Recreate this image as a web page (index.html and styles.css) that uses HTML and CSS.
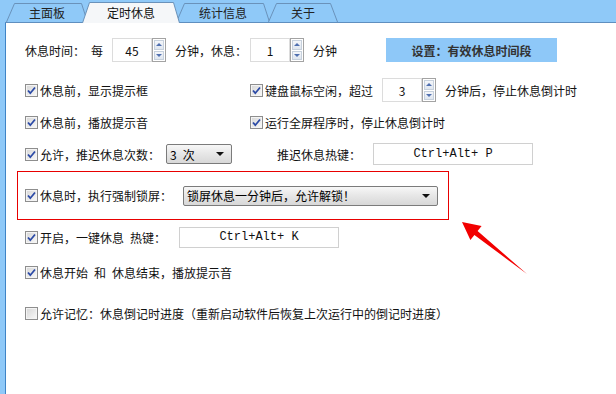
FILE: index.html
```html
<!DOCTYPE html>
<html lang="zh-CN">
<head>
    <meta charset="UTF-8">
    <title>定时休息</title>
    <link rel="stylesheet" href="styles.css">
</head>
<body>
    <div class="app">
        <div class="tabbar">
            <div class="tab tab-main">
                <svg width="82" height="19"><polygon points="0.5,19 8.5,0.5 75.5,0.5 81.5,19" fill="#8fc9f8"/><polyline points="0.5,19 8.5,0.5 75.5,0.5 81.5,19" fill="none" stroke="#6a92ba"/></svg>
                <span>主面板</span>
            </div>
            <div class="tab tab-timer active">
                <svg width="98" height="21"><polygon points="0.5,21 7.5,0.5 91.5,0.5 97.5,21" fill="#f5f7f9"/><polyline points="0.5,21 7.5,0.5 91.5,0.5 97.5,21" fill="none" stroke="#6a92ba"/></svg>
                <span>定时休息</span>
            </div>
            <div class="tab tab-stats">
                <svg width="94" height="19"><polygon points="0.5,19 8.5,0.5 87.5,0.5 93.5,19" fill="#8fc9f8"/><polyline points="0.5,19 8.5,0.5 87.5,0.5 93.5,19" fill="none" stroke="#6a92ba"/></svg>
                <span>统计信息</span>
            </div>
            <div class="tab tab-about">
                <svg width="70" height="19"><polygon points="0.5,19 8.5,0.5 62.5,0.5 69.5,19" fill="#8fc9f8"/><polyline points="0.5,19 8.5,0.5 62.5,0.5 69.5,19" fill="none" stroke="#6a92ba"/></svg>
                <span>关于</span>
            </div>
        </div>

        <div class="body">
            <div class="panel">
                <div class="row row-first">
                    <span>休息时间：</span>
                    <span class="every">每</span>
                    <span class="num num-a">45</span>
                    <span class="spin"><span class="up"></span><span class="dn"></span></span>
                    <span class="after-spin">分钟，休息：</span>
                    <span class="num num-b">1</span>
                    <span class="spin"><span class="up"></span><span class="dn"></span></span>
                    <span class="after-spin">分钟</span>
                    <span class="setting-btn">设置：有效休息时间段</span>
                </div>

                <div class="row row-gap16">
                    <div class="col-left">
                        <span class="chk"><svg width="11" height="11"><path d="M2 5.5 L4.3 8.2 L9 2.5" fill="none" stroke="#2b4aa6" stroke-width="1.8"/></svg></span>
                        <span class="lbl">休息前，显示提示框</span>
                    </div>
                    <span class="chk"><svg width="11" height="11"><path d="M2 5.5 L4.3 8.2 L9 2.5" fill="none" stroke="#2b4aa6" stroke-width="1.8"/></svg></span>
                    <span class="lbl">键盘鼠标空闲，超过</span>
                    <span class="num num-c">3</span>
                    <span class="spin"><span class="up"></span><span class="dn"></span></span>
                    <span class="after-spin">分钟后，停止休息倒计时</span>
                </div>

                <div class="row row-gap8">
                    <div class="col-left">
                        <span class="chk"><svg width="11" height="11"><path d="M2 5.5 L4.3 8.2 L9 2.5" fill="none" stroke="#2b4aa6" stroke-width="1.8"/></svg></span>
                        <span class="lbl">休息前，播放提示音</span>
                    </div>
                    <span class="chk"><svg width="11" height="11"><path d="M2 5.5 L4.3 8.2 L9 2.5" fill="none" stroke="#2b4aa6" stroke-width="1.8"/></svg></span>
                    <span class="lbl">运行全屏程序时，停止休息倒计时</span>
                </div>

                <div class="row row-gap8">
                    <span class="chk"><svg width="11" height="11"><path d="M2 5.5 L4.3 8.2 L9 2.5" fill="none" stroke="#2b4aa6" stroke-width="1.8"/></svg></span>
                    <span class="lbl">允许，推迟休息次数：</span>
                    <span class="combo combo-small"><span class="combo-text">3&ensp;次</span><span class="combo-arrow"></span></span>
                    <span class="delay-label">推迟休息热键：</span>
                    <span class="hotkey hotkey-delay">Ctrl+Alt+ P</span>
                </div>

                <div class="lock-box">
                    <span class="chk"><svg width="11" height="11"><path d="M2 5.5 L4.3 8.2 L9 2.5" fill="none" stroke="#2b4aa6" stroke-width="1.8"/></svg></span>
                    <span class="lbl lock-label">休息时，执行强制锁屏：</span>
                    <span class="combo combo-wide"><span class="combo-text">锁屏休息一分钟后，允许解锁！</span><span class="combo-arrow"></span></span>
                </div>

                <div class="row row-gap5">
                    <span class="chk"><svg width="11" height="11"><path d="M2 5.5 L4.3 8.2 L9 2.5" fill="none" stroke="#2b4aa6" stroke-width="1.8"/></svg></span>
                    <span class="lbl hk-label">开启，一键休息&ensp;热键：</span>
                    <span class="hotkey">Ctrl+Alt+ K</span>
                </div>

                <div class="row row-gap11">
                    <span class="chk"><svg width="11" height="11"><path d="M2 5.5 L4.3 8.2 L9 2.5" fill="none" stroke="#2b4aa6" stroke-width="1.8"/></svg></span>
                    <span class="lbl">休息开始&ensp;和&ensp;休息结束，播放提示音</span>
                </div>

                <div class="row row-gap17">
                    <span class="chk"></span>
                    <span class="lbl">允许记忆：休息倒记时进度（重新启动软件后恢复上次运行中的倒记时进度）</span>
                </div>
            </div>

            <svg class="arrow" width="85" height="65">
                <polygon points="12,7 31.6,11 27.6,16 77,59 24.4,20 20.4,25" fill="#f20000"/>
            </svg>
        </div>
    </div>
</body>
</html>
```

FILE: styles.css
```css
html, body {
    margin: 0;
    padding: 0;
}

body {
    font-family: "Noto Sans CJK SC", "Noto Sans", sans-serif;
    font-size: 12px;
    color: #111;
    background-color: #fff;
}

.app {
    width: 616px;
    height: 394px;
    display: flex;
    flex-direction: column;
    background-color: #8fc9f8;
    overflow: hidden;
}

/* tab strip */
.tabbar {
    height: 22px;
    margin-left: 5px;
    border-bottom: 1px solid #5f8fbf;
    display: flex;
    align-items: flex-end;
    padding-left: 1px;
}

.tab {
    position: relative;
    height: 19px;
    display: flex;
    align-items: center;
    justify-content: center;
    color: #222;
    z-index: 1;
}

.tab svg {
    position: absolute;
    left: 0;
    top: 0;
}

.tab span {
    position: relative;
    line-height: 14px;
    padding-top: 1px;
}

.tab-main {
    width: 82px;
}

.tab-timer {
    width: 98px;
    margin-left: -6px;
}

.tab-stats {
    width: 94px;
    margin-left: -4px;
}

.tab-about {
    width: 70px;
    margin-left: -2px;
}

.tab.active {
    height: 21px;
    margin-bottom: -1px;
    z-index: 3;
    color: #111;
}

/* content */
.body {
    flex: 1;
    position: relative;
    margin-left: 5px;
    border-left: 1px solid #3f84c6;
    background-color: #fff;
}

.panel {
    padding: 15px 0 0 19px;
}

.row {
    height: 24px;
    display: flex;
    align-items: center;
    white-space: nowrap;
}

.row-gap16 { margin-top: 16px; }
.row-gap8 { margin-top: 8px; }
.row-gap5 { margin-top: 5px; }
.row-gap11 { margin-top: 11px; }
.row-gap17 { margin-top: 17px; }

.col-left {
    width: 225px;
    display: flex;
    align-items: center;
}

.every {
    margin-left: 6px;
}

.num {
    width: 40px;
    height: 24px;
    box-sizing: border-box;
    border: 1px solid #dcdcdc;
    display: flex;
    align-items: center;
    justify-content: center;
    margin-left: 9px;
    color: #111;
}

.num-b {
    margin-left: 3px;
}

.spin {
    width: 14px;
    height: 24px;
    box-sizing: border-box;
    border: 1px solid #a3a3a3;
    display: flex;
    flex-direction: column;
    padding: 1px;
    gap: 1px;
    background-color: #fff;
}

.spin .up,
.spin .dn {
    flex: 1;
    display: flex;
    align-items: center;
    justify-content: center;
    background: linear-gradient(#f4f6fa, #dfe6ef);
    border: 1px solid #c6d0dc;
}

.spin .up::after,
.spin .dn::after {
    content: "";
    border-left: 3px solid transparent;
    border-right: 3px solid transparent;
}

.spin .up::after {
    border-bottom: 3px solid #4f6fb0;
}

.spin .dn::after {
    border-top: 3px solid #4f6fb0;
}

.after-spin {
    margin-left: 9px;
}

.setting-btn {
    margin-left: 49px;
    width: 171px;
    height: 24px;
    background-color: #8ec8f8;
    font-weight: bold;
    color: #333;
    display: flex;
    align-items: center;
    justify-content: center;
}

/* checkboxes */
.chk {
    width: 13px;
    height: 13px;
    box-sizing: border-box;
    border: 1px solid #8e8e8e;
    background: linear-gradient(135deg, #d6d6d6, #f9f9f9);
    box-shadow: inset 0 0 0 1px #f4f4f4;
    display: flex;
    align-items: center;
    justify-content: center;
    flex-shrink: 0;
}

.lbl {
    margin-left: 2px;
}

/* drop downs */
.combo {
    height: 20px;
    box-sizing: border-box;
    border: 1px solid #7b7b7b;
    border-radius: 2px;
    background: linear-gradient(#f7f7f7, #e6e6e6 50%, #d8d8d8);
    display: flex;
    align-items: center;
    justify-content: space-between;
    padding: 0 7px 0 3px;
    color: #000;
}

.combo-small {
    width: 66px;
    margin-left: 6px;
}

.combo-wide {
    width: 255px;
    margin-left: 11px;
}

.combo-arrow {
    border-left: 4px solid transparent;
    border-right: 4px solid transparent;
    border-top: 4px solid #111;
}

.delay-label {
    margin-left: 45px;
}

.hotkey {
    width: 160px;
    height: 21px;
    box-sizing: border-box;
    border: 1px solid #d0d0d0;
    background-color: #fff;
    font-family: "Liberation Mono", monospace;
    font-size: 12px;
    display: flex;
    align-items: center;
    justify-content: center;
    color: #111;
}

.hotkey-delay {
    height: 22px;
    margin-left: 12px;
}

.hk-label {
    width: 139px;
}

/* highlighted lock row */
.lock-box {
    margin: 5px 0 0 -8px;
    width: 432px;
    height: 49px;
    box-sizing: border-box;
    border: 1px solid #e80000;
    padding-left: 7px;
    display: flex;
    align-items: center;
    white-space: nowrap;
}

.arrow {
    position: absolute;
    left: 444px;
    top: 192px;
}
```
